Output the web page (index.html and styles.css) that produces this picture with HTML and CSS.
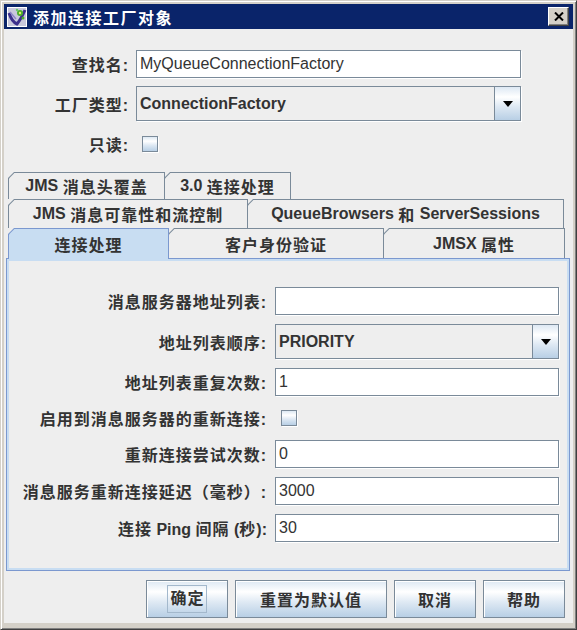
FILE: index.html
```html
<!DOCTYPE html>
<html lang="zh-CN">
<head>
<meta charset="utf-8">
<title>添加连接工厂对象</title>
<link rel="stylesheet" href="styles.css">
</head>
<body>
<div class="window">
  <div class="titlebar">
    <svg class="app-icon" viewBox="0 0 20 20" width="20" height="20">
      <rect x="0.5" y="0.5" width="19" height="19" fill="#c8c8dc" stroke="#ffffff"/>
      <path d="M2 6 Q5 15 10 17 Q14 12 18 3" fill="none" stroke="#3c2f8c" stroke-width="3"/>
      <path d="M3 5 L9 12" fill="none" stroke="#8c84c8" stroke-width="1.5"/>
      <circle cx="13" cy="6" r="3" fill="#4caf2a"/>
      <circle cx="13" cy="6" r="1.2" fill="#e8f070"/>
      <circle cx="16" cy="11" r="1.5" fill="#4caf2a"/>
      <circle cx="10" cy="3" r="1.2" fill="#66cc66"/>
    </svg>
    <span class="title">添加连接工厂对象</span>
    <div class="close">
      <svg viewBox="0 0 10 9" width="10" height="9"><path d="M1 0.5 L9 8.5 M9 0.5 L1 8.5" stroke="#000" stroke-width="2"/></svg>
    </div>
  </div>
  <div class="client">
    <div class="top-form">
      <div class="lbl">查找名:</div>
      <div class="field">MyQueueConnectionFactory</div>
      <div class="lbl">工厂类型:</div>
      <div class="combo"><span class="combo-val">ConnectionFactory</span><span class="combo-btn"><i class="arrow"></i></span></div>
      <div class="lbl">只读:</div>
      <div class="chk-cell"><span class="chk"></span></div>
    </div>

    <div class="tabbed">
      <div class="tab-row row1">
        <div class="tab w-hdr"><div class="tab-in"><span class="lat">JMS </span>消息头覆盖</div></div>
        <div class="tab w-30"><div class="tab-in"><span class="lat">3.0 </span>连接处理</div></div>
      </div>
      <div class="tab-row row2">
        <div class="tab w-rel"><div class="tab-in"><span class="lat">JMS </span>消息可靠性和流控制</div></div>
        <div class="tab w-qb"><div class="tab-in"><span class="lat">QueueBrowsers </span>和<span class="lat"> ServerSessions</span></div></div>
      </div>
      <div class="tab-row row3">
        <div class="tab selected w-conn"><div class="tab-in">连接处理</div></div>
        <div class="tab w-auth"><div class="tab-in">客户身份验证</div></div>
        <div class="tab w-jmsx"><div class="tab-in"><span class="lat">JMSX </span>属性</div></div>
      </div>
      <div class="panel">
        <div class="lbl">消息服务器地址列表:</div>
        <div class="field"></div>
        <div class="lbl">地址列表顺序:</div>
        <div class="combo"><span class="combo-val">PRIORITY</span><span class="combo-btn"><i class="arrow"></i></span></div>
        <div class="lbl">地址列表重复次数:</div>
        <div class="field">1</div>
        <div class="lbl">启用到消息服务器的重新连接:</div>
        <div class="chk-cell"><span class="chk"></span></div>
        <div class="lbl">重新连接尝试次数:</div>
        <div class="field">0</div>
        <div class="lbl">消息服务重新连接延迟（毫秒）:</div>
        <div class="field">3000</div>
        <div class="lbl">连接<span class="lat"> Ping </span>间隔<span class="lat"> (</span>秒<span class="lat">):</span></div>
        <div class="field">30</div>
      </div>
    </div>

    <div class="buttons">
      <div class="btn btn-sm"><span class="focus">确定</span></div>
      <div class="btn btn-lg">重置为默认值</div>
      <div class="btn btn-sm">取消</div>
      <div class="btn btn-sm">帮助</div>
    </div>
  </div>
</div>
</body>
</html>
```

FILE: styles.css
```css
* { box-sizing: border-box; }
html, body { margin: 0; padding: 0; }
body {
  width: 577px;
  height: 630px;
  overflow: hidden;
  background: #d4d0c8;
  font-family: "Liberation Sans", "Noto Sans CJK SC", sans-serif;
  font-size: 16px;
  color: #333333;
}

.window {
  width: 577px;
  height: 630px;
  border: 1px solid;
  border-color: #d4d0c8 #404040 #404040 #d4d0c8;
  box-shadow: inset 1px 1px 0 #ffffff, inset -1px -1px 0 #808080;
  padding: 3px 3px 6px 3px;
  display: flex;
  flex-direction: column;
  background: #d4d0c8;
}

.titlebar {
  height: 25px;
  flex: none;
  background: #0a246a;
  display: flex;
  align-items: center;
  padding: 0 4px 0 3px;
}
.app-icon { flex: none; display: block; }
.title {
  flex: 1;
  margin-left: 6px;
  color: #ffffff;
  font-weight: bold;
  font-size: 16px;
  letter-spacing: 1.5px;
  white-space: nowrap;
}
.close {
  width: 21px;
  height: 19px;
  flex: none;
  background: #d4d0c8;
  border: 1px solid;
  border-color: #ffffff #404040 #404040 #ffffff;
  box-shadow: inset -1px -1px 0 #808080;
  display: flex;
  align-items: center;
  justify-content: center;
}
.close svg { display: block; }

.client {
  flex: 1;
  background: #eeeeee;
  display: flex;
  flex-direction: column;
}

.lat { letter-spacing: 0; }

.lbl {
  text-align: right;
  font-weight: bold;
  letter-spacing: 1px;
  white-space: nowrap;
  color: #333333;
}

.top-form {
  display: grid;
  grid-template-columns: 125px 385px;
  grid-template-rows: 28px 35px 30px;
  column-gap: 7px;
  row-gap: 8px;
  padding-top: 21px;
  align-items: center;
}

.field {
  height: 28px;
  background: #ffffff;
  border: 1px solid #7a8a99;
  box-shadow: 1px 1px 0 #ffffff;
  padding-left: 3px;
  line-height: 26px;
  white-space: nowrap;
  overflow: hidden;
  color: #333333;
}

.combo {
  height: 35px;
  display: flex;
  background: #eeeeee;
  border: 1px solid #7a8a99;
  box-shadow: 1px 1px 0 #ffffff;
}
.combo-val {
  flex: 1;
  padding-left: 3px;
  line-height: 33px;
  font-weight: bold;
  color: #333333;
  white-space: nowrap;
}
.combo-btn {
  width: 26px;
  flex: none;
  border-left: 1px solid #7a8a99;
  background: linear-gradient(to bottom, #dde8f3 0%, #ffffff 30%, #dde8f3 60%, #b8cfe5 100%);
  display: flex;
  align-items: center;
  justify-content: center;
}
.arrow {
  display: block;
  width: 0;
  height: 0;
  border-top: 6px solid #000000;
  border-left: 5px solid transparent;
  border-right: 5px solid transparent;
}

.chk-cell { display: flex; align-items: center; padding-left: 6px; }
.chk {
  display: block;
  width: 16px;
  height: 16px;
  border: 1px solid #7a8a99;
  box-shadow: 1px 1px 0 #ffffff;
  background: linear-gradient(to bottom, #dde8f3 0%, #ffffff 30%, #dde8f3 60%, #b8cfe5 100%);
}

/* tabbed pane */
.tabbed {
  margin: 13px 0 0 2px;
  width: 564px;
}
.tab-row {
  display: flex;
  padding-left: 2px;
}
.row1 { height: 27px; }
.row2 { height: 29px; }
.row3 { height: 30px; }

.tab {
  height: 100%;
  flex: none;
  background: #7a8a99;
  padding: 1px 1px 0 1px;
  clip-path: polygon(6px 0, 100% 0, 100% 100%, 0 100%, 0 6px);
}
.tab + .tab { margin-left: -1px; }
.tab-in {
  height: 100%;
  background: #eeeeee;
  clip-path: polygon(5.4px 0, 100% 0, 100% 100%, 0 100%, 0 5.4px);
  display: flex;
  align-items: center;
  justify-content: center;
  font-weight: bold;
  letter-spacing: 1px;
  white-space: pre;
  color: #333333;
}
.tab.selected {
  background: #7b98cf;
  height: 31px;
  margin-bottom: -1px;
  position: relative;
  z-index: 1;
}
.tab.selected .tab-in { background: #c8ddf2; padding-bottom: 1px; }

.w-hdr { width: 157px; }
.w-30 { width: 127px; }
.w-rel { width: 240px; }
.w-qb { width: 317px; }
.w-conn { width: 161px; }
.w-auth { width: 216px; }
.w-jmsx { width: 182px; }

.panel {
  height: 313px;
  border: 1px solid #7b98cf;
  box-shadow: inset 0 0 0 2px #c8ddf2;
  background: #eeeeee;
  padding-top: 28px;
  display: grid;
  grid-template-columns: 260px 284px;
  grid-template-rows: 28px 35px 28px 26px 28px 28px 28px;
  column-gap: 8px;
  row-gap: 9px;
  align-content: start;
  align-items: center;
}

/* buttons */
.buttons {
  display: flex;
  justify-content: flex-end;
  gap: 7px;
  margin-top: 9px;
  padding-right: 8px;
}
.btn {
  height: 38px;
  border: 1px solid #7a8a99;
  box-shadow: inset 1px 1px 0 #ffffff;
  background: linear-gradient(to bottom, #dde8f3 0%, #ffffff 30%, #dde8f3 60%, #b8cfe5 100%);
  display: flex;
  align-items: center;
  justify-content: center;
  font-weight: bold;
  letter-spacing: 1px;
  color: #333333;
  white-space: nowrap;
}
.btn-sm { width: 82px; }
.btn-lg { width: 152px; }
.focus {
  border: 1px solid #a3b8cc;
  padding: 4px 1px 4px 2px;
  line-height: 18px;
}
```
